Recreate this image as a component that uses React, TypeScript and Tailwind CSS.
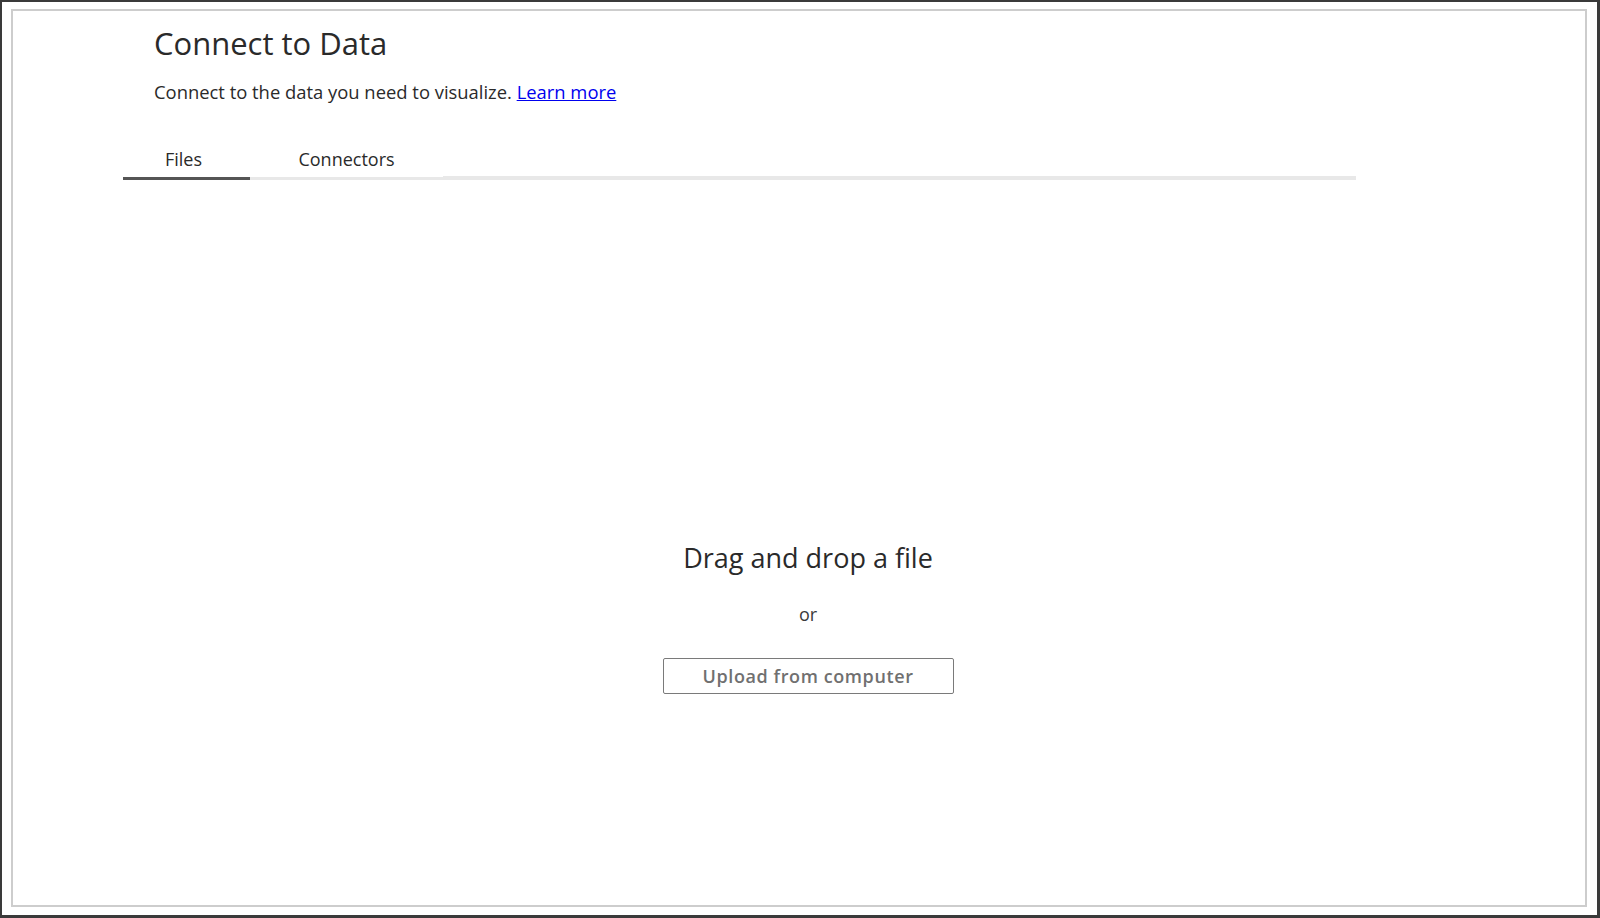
export default function App() {
  return (
    <div
      className="w-[1600px] h-[918px] bg-white border-[#3a3a3a] border-t-2 border-l-2 border-r-[3px] border-b-[3px] pt-[7px] pl-[9px] pr-[10px] pb-[8px]"
      style={{ fontFamily: "'Open Sans', 'Liberation Sans', sans-serif" }}
    >
      <div className="h-full border-2 border-[#cdcdcd] flex flex-col">
        {/* header */}
        <div className="pl-[141px] pt-[14px]">
          <h1 className="text-[31px] leading-[36px] text-[#2a2a2a]">Connect to Data</h1>
          <p className="mt-[19px] text-[18.4px] leading-[24px] text-[#2a2a2a]">
            Connect to the data you need to visualize.{" "}
            <a href="#" className="text-[#0000ee] underline">
              Learn more
            </a>
          </p>
        </div>

        {/* tabs */}
        <div className="pl-[110px] mt-[43px] flex items-end">
          <div className="w-[127px] pr-[6px] text-center text-[18px] leading-[24px] text-[#2a2a2a] pb-[6px] border-b-[3px] border-[#555555]">
            Files
          </div>
          <div className="w-[193px] text-center text-[18px] leading-[24px] text-[#2a2a2a] pb-[6px] border-b-[3px] border-[#e8e8e8]">
            Connectors
          </div>
          <div className="w-[913px] h-[4px] bg-[#e8e8e8]" />
        </div>

        {/* drop zone */}
        <div className="flex flex-col items-center pl-[18px] mt-[362px]">
          <div className="text-[27px] leading-[32px] text-[#2a2a2a]">Drag and drop a file</div>
          <div className="mt-[28px] text-[18px] leading-[24px] text-[#3a3a3a]">or</div>
          <button className="mt-[32px] w-[291px] h-[36px] border-[1.5px] border-[#7a7a7a] rounded-[2px] text-[18px] font-semibold tracking-[0.6px] text-[#707070] bg-white">
            Upload from computer
          </button>
        </div>
      </div>
    </div>
  );
}
